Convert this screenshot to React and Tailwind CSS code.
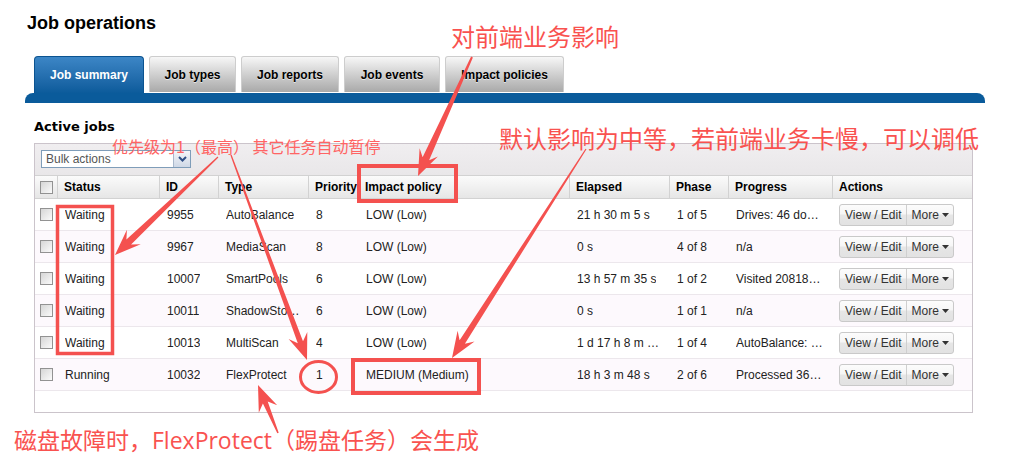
const rows = [
  { status: 'Waiting', id: '9955', type: 'AutoBalance', pri: '8', impact: 'LOW (Low)', elapsed: '21 h 30 m 5 s', phase: '1 of 5', progress: 'Drives: 46 done, 0 in progress' },
  { status: 'Waiting', id: '9967', type: 'MediaScan', pri: '8', impact: 'LOW (Low)', elapsed: '0 s', phase: '4 of 8', progress: 'n/a' },
  { status: 'Waiting', id: '10007', type: 'SmartPools', pri: '6', impact: 'LOW (Low)', elapsed: '13 h 57 m 35 s', phase: '1 of 2', progress: 'Visited 208184 LINs' },
  { status: 'Waiting', id: '10011', type: 'ShadowStoreDelete', pri: '6', impact: 'LOW (Low)', elapsed: '0 s', phase: '1 of 1', progress: 'n/a' },
  { status: 'Waiting', id: '10013', type: 'MultiScan', pri: '4', impact: 'LOW (Low)', elapsed: '1 d 17 h 8 m 12 s', phase: '1 of 4', progress: 'AutoBalance: 12 LINs' },
  { status: 'Running', id: '10032', type: 'FlexProtect', pri: '1', impact: 'MEDIUM (Medium)', elapsed: '18 h 3 m 48 s', phase: '2 of 6', progress: 'Processed 3600 LINs' },
]

const tabs = [
  { label: 'Job types', w: 'w-[87px]' },
  { label: 'Job reports', w: 'w-[98px]' },
  { label: 'Job events', w: 'w-[96px]' },
  { label: 'Impact policies', w: 'w-[119px]' },
]

// column template shared by header and rows
const cols = 'grid grid-cols-[23px_102px_59px_90px_50px_211px_100px_59px_104px_139px]'

function Checkbox() {
  return <div className="w-[13px] h-[13px] border border-[#929292] bg-gradient-to-br from-[#d6d6d6] to-[#fbfbfb]" />
}

function Cell({ children, className = '' }) {
  return <div className={`flex items-center min-w-0 pl-[7px] pr-[9px] pt-[1px] ${className}`}><span className="truncate">{children}</span></div>
}

function ActionButton() {
  return (
    <div className="flex h-[22px] border border-[#c9c9c9] rounded-[3px] bg-[linear-gradient(to_bottom,#fcfcfc_0%,#f6f6f6_45%,#e6e6e6_50%,#e2e2e2_100%)] text-[12px] text-[#333]">
      <span className="flex items-center px-[5px] border-r border-[#cfcfcf]">View / Edit</span>
      <span className="flex items-center gap-[3px] pl-[4px] pr-[4px]">
        More
        <svg width="7" height="4" viewBox="0 0 7 4"><path d="M0 0h7L3.5 4z" fill="#333" /></svg>
      </span>
    </div>
  )
}

function arrow(x1, y1, x2, y2, tw = 0.7, sw = 3, head = 22, hw = 10) {
  const dx = x2 - x1, dy = y2 - y1, L = Math.hypot(dx, dy)
  const ux = dx / L, uy = dy / L, nx = -uy, ny = ux
  const bx = x2 - ux * head, by = y2 - uy * head
  const wx = bx - ux * 4, wy = by - uy * 4
  const pts = [
    [x1 + nx * tw, y1 + ny * tw],
    [bx + ux * 3 + nx * sw, by + uy * 3 + ny * sw],
    [wx + nx * hw, wy + ny * hw],
    [x2, y2],
    [wx - nx * hw, wy - ny * hw],
    [bx + ux * 3 - nx * sw, by + uy * 3 - ny * sw],
    [x1 - nx * tw, y1 - ny * tw],
  ]
  return pts.map(p => p.map(v => v.toFixed(1)).join(',')).join(' ')
}

function Annotations() {
  const red = '#f4514f'
  return (
    <>
      <svg className="absolute inset-0 pointer-events-none" width="1020" height="468">
        <rect x="359" y="166" width="97" height="35" fill="none" stroke={red} strokeWidth="4" />
        <rect x="57.5" y="206.5" width="55" height="147" fill="none" stroke={red} strokeWidth="3.5" />
        <ellipse cx="318.5" cy="377" rx="18" ry="15.5" fill="none" stroke={red} strokeWidth="3" />
        <rect x="353" y="360" width="126" height="33" fill="none" stroke={red} strokeWidth="4" />
        <polygon points={arrow(472, 57, 418, 176, 1, 3.6)} fill={red} />
        <polygon points={arrow(586, 149, 452, 358, 0.6, 3.2)} fill={red} />
        <polygon points={arrow(218, 157, 115, 255, 0.6, 3.4)} fill={red} />
        <polygon points={arrow(231, 155, 307, 360, 0.6, 2.8)} fill={red} />
        <polygon points={arrow(278, 433, 258, 385, 0.8, 2.6)} fill={red} />
      </svg>
      <div className="absolute left-[451px] top-[24px] text-[24px] leading-[24px] text-[#f9524f] whitespace-nowrap font-['Noto_Sans_CJK_SC',sans-serif]">对前端业务影响</div>
      <div className="absolute left-[499px] top-[126px] text-[24px] leading-[24px] text-[#f9524f] whitespace-nowrap font-['Noto_Sans_CJK_SC',sans-serif]">默认影响为中等，若前端业务卡慢，可以调低</div>
      <div className="absolute left-[112px] top-[138px] text-[16px] leading-[16px] text-[#ff6464] whitespace-nowrap font-['Noto_Sans_CJK_SC',sans-serif]">优先级为1（最高） 其它任务自动暂停</div>
      <div className="absolute left-[14px] top-[427px] text-[23px] leading-[24px] text-[#f9524f] whitespace-nowrap font-['Noto_Sans_CJK_SC',sans-serif]">
        磁盘故障时，<span className="font-['Open_Sans',sans-serif]">FlexProtect</span>（踢盘任务）会生成
      </div>
    </>
  )
}

export default function App() {
  return (
    <div className="relative w-[1020px] h-[468px] overflow-hidden bg-white text-black font-['Liberation_Sans',Arial,sans-serif]">
      <h1 className="pl-[27px] pt-[12px] text-[18px] leading-[22px] font-bold">Job operations</h1>

      {/* tab strip */}
      <div className="ml-[25px] mt-[22px] w-[960px]">
        <div className="flex items-end gap-[5px] pl-[9px] h-[37px]">
          <div className="w-[110px] h-[37px] flex items-center justify-center rounded-t-[4px] border border-b-0 border-[#0b5390] bg-gradient-to-b from-[#3c86c6] to-[#0b5b9b] text-white text-[12px] font-bold">
            Job summary
          </div>
          {tabs.map(t => (
            <div key={t.label} className={`${t.w} h-[36px] mb-[1px] flex items-center justify-center rounded-t-[3px] border border-b-0 border-[#cdcdcd] bg-gradient-to-b from-[#f7f7f7] to-[#a9a9a9] text-[12px] font-bold [text-shadow:0_1px_0_rgba(255,255,255,0.6)]`}>
              {t.label}
            </div>
          ))}
        </div>
        <div className="h-[10px] bg-[#0a5b9b] rounded-t-[8px]" />
      </div>

      <div className="ml-[34px] mt-[16px] text-[13px] leading-[16px] font-bold font-['DejaVu_Sans',Verdana,sans-serif]">Active jobs</div>

      <div className="ml-[34px] mt-[8px] w-[939px] h-[270px] border border-[#cbc4cb]">
        {/* toolbar */}
        <div className="h-[31px] pl-[6px] pt-[6px] bg-gradient-to-b from-[#f0eef0] to-[#e9e7e9]">
          <div className="flex w-[150px] h-[18px] border border-[#7f9db9] bg-white">
            <span className="flex-1 pl-[4px] text-[12px] leading-[16px] text-[#555]">Bulk actions</span>
            <span className="w-[17px] flex items-center justify-center border-l border-[#a9b8cc] bg-gradient-to-b from-[#f4f6fa] to-[#cfd8e6]">
              <svg width="9" height="6" viewBox="0 0 9 6"><path d="M1 1l3.5 3.5L8 1" fill="none" stroke="#2f4f86" strokeWidth="2" /></svg>
            </span>
          </div>
        </div>

        {/* header */}
        <div className={`${cols} h-[24px] border-t border-b border-[#d2d2d2] bg-gradient-to-b from-[#fbfbfb] to-[#e6e6e6] text-[12px] font-bold`}>
          <div className="flex items-center justify-center border-r border-[#d2d2d2]"><Checkbox /></div>
          {['Status', 'ID', 'Type', 'Priority', 'Impact policy', 'Elapsed', 'Phase', 'Progress', 'Actions'].map((h, i) => (
            <div key={h} className={`flex items-center pl-[6px] whitespace-nowrap overflow-hidden ${i < 8 ? 'border-r border-[#d2d2d2]' : ''}`}>{h}</div>
          ))}
        </div>

        {/* rows */}
        {rows.map((r, i) => (
          <div key={r.id} className={`${cols} h-[32px] border-b border-[#ece7ec] text-[12px] text-[#222] ${i % 2 ? 'bg-[#fdf9fd]' : 'bg-white'}`}>
            <div className="flex items-center justify-center"><Checkbox /></div>
            <Cell>{r.status}</Cell>
            <Cell>{r.id}</Cell>
            <Cell>{r.type}</Cell>
            <Cell>{r.pri}</Cell>
            <Cell>{r.impact}</Cell>
            <Cell className="pl-[6px]">{r.elapsed}</Cell>
            <Cell className="pl-[6px]">{r.phase}</Cell>
            <Cell>{r.progress}</Cell>
            <div className="flex items-center pl-[6px]"><ActionButton /></div>
          </div>
        ))}
      </div>

      <Annotations />
    </div>
  )
}
